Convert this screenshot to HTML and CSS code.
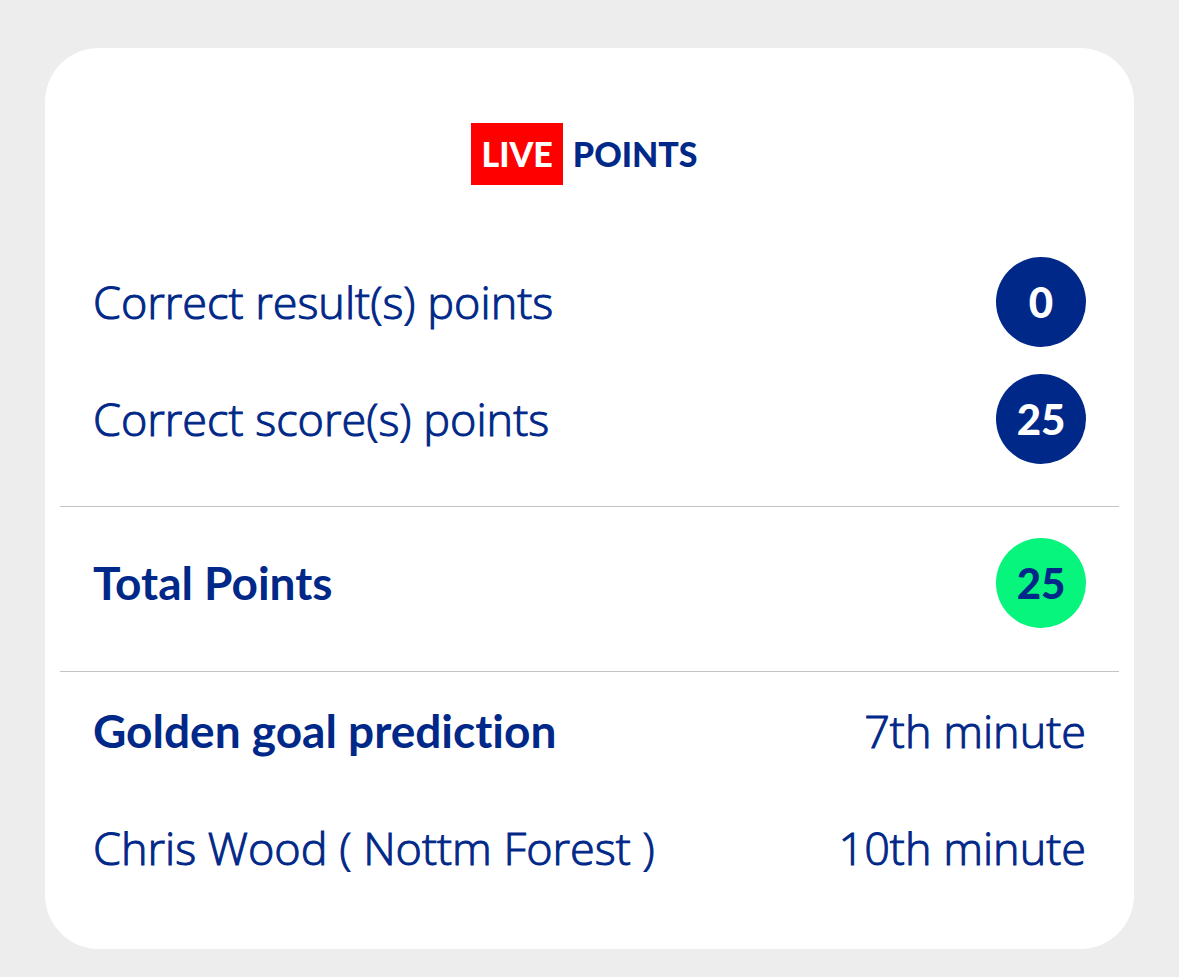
FILE: index.html
```
<!DOCTYPE html>
<html lang="en">

<head>
  <meta charset="UTF-8">
  <meta name="viewport" content="width=device-width, initial-scale=1.0">
  <title>Live points</title>
  <link rel="stylesheet" href="styles.css">
</head>

<body>
  <main class="card">
    <h1 class="title"><span class="live">LIVE</span> <span class="points">POINTS</span></h1>

    <section class="section">
      <div class="row">
        <span class="label">Correct result(s) points</span>
        <span class="badge">0</span>
      </div>
      <div class="row">
        <span class="label">Correct score(s) points</span>
        <span class="badge">25</span>
      </div>
    </section>

    <section class="section total">
      <div class="row">
        <span class="strong">Total Points</span>
        <span class="badge badge-total">25</span>
      </div>
    </section>

    <section class="section golden">
      <div class="row">
        <span class="strong">Golden goal prediction</span>
        <span class="label">7th minute</span>
      </div>
      <div class="row">
        <span class="label">Chris Wood ( Nottm Forest )</span>
        <span class="label">10th minute</span>
      </div>
    </section>
  </main>
</body>
</html>
```

FILE: styles.css
```
body {
  margin: 0;
  padding: 48px 45px 28px;
  background-color: #ededed;
  color: #002888;
  font-family: Lato, sans-serif;
  font-size: 46px;
  line-height: 56px;
}

.card {
  padding: 75px 15px 15px;
  background-color: #fff;
  border-radius: 54px;
}

.title {
  display: flex;
  justify-content: center;
  align-items: center;
  margin: 0 0 58px;
  font-size: 34px;
  font-weight: 900;
  line-height: 62px;
}

.live,
.points {
  margin-right: 10px;
}

.live {
  padding: 0 10px;
  background-color: #ff0000;
  color: #fff;
}

.section {
  padding: 0 33px 29px;
}

.row {
  display: flex;
  justify-content: space-between;
  align-items: center;
  min-height: 117px;
}

.total,
.golden {
  border-top: 1px solid #c4c4c8;
}

.total {
  padding: 17px 33px 30px;
}

.golden {
  padding-bottom: 28px;
}

.label {
  font-family: "Open Sans", sans-serif;
  font-size: 45px;
  font-weight: 300;
  -webkit-text-stroke: 1px #002888;
}

.strong {
  font-weight: 700;
  font-variant-ligatures: none;
}

.badge {
  width: 90px;
  height: 90px;
  border-radius: 50%;
  background-color: #002888;
  color: #fff;
  font-size: 42px;
  font-weight: 900;
  line-height: 90px;
  text-align: center;
}

.badge-total {
  background-color: #07f47d;
  color: #002888;
}
```
